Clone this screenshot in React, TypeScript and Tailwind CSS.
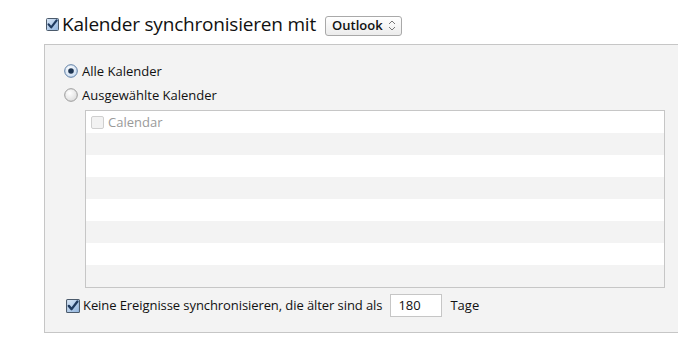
import React from 'react';

const Check = ({ size = 13 }: { size?: number }) => (
  <svg width={size} height={size} viewBox="0 0 13 13" className="shrink-0">
    <defs>
      <linearGradient id="cbg" x1="0" y1="0" x2="1" y2="1">
        <stop offset="0" stopColor="#dbe8f7" />
        <stop offset="1" stopColor="#8fb3dd" />
      </linearGradient>
    </defs>
    <rect x="0.5" y="0.5" width="12" height="12" rx="1" fill="url(#cbg)" stroke="#4b5a6b" />
    <path d="M2.6 6.4 L5.2 9.4 L10.6 2.4" fill="none" stroke="#1f3a5f" strokeWidth="2.2" strokeLinecap="round" strokeLinejoin="round" />
  </svg>
);

const EmptyBox = () => (
  <svg width="13" height="13" viewBox="0 0 13 13" className="shrink-0">
    <rect x="0.5" y="0.5" width="12" height="12" rx="1.5" fill="#f2f2f2" stroke="#cfcfcf" />
  </svg>
);

const Radio = ({ on }: { on?: boolean }) => (
  <svg width="14" height="14" viewBox="0 0 14 14" className="shrink-0">
    <defs>
      <radialGradient id={on ? 'rOn' : 'rOff'} cx="0.4" cy="0.35" r="0.7">
        <stop offset="0" stopColor="#ffffff" />
        <stop offset="1" stopColor={on ? '#c6d9ef' : '#dcdcdc'} />
      </radialGradient>
    </defs>
    <circle cx="7" cy="7" r="6.3" fill={`url(#${on ? 'rOn' : 'rOff'})`} stroke={on ? '#5f7fa5' : '#9a9a9a'} />
    {on && <circle cx="7" cy="7" r="2.8" fill="#1e3552" />}
  </svg>
);

const rows = Array.from({ length: 8 });

export default function App() {
  return (
    <div
      className="w-[678px] h-[344px] bg-white text-[#111] overflow-hidden"
      style={{ fontFamily: '"Open Sans", "Noto Sans", sans-serif' }}
    >
      <div className="h-[44px] pt-[15px] pl-[46px]">
        <div className="flex items-center h-[21px]">
          <span className="-mt-[3px]"><Check /></span>
          <span className="ml-[3px] text-[19px] leading-none tracking-[-0.2px] -mt-[2px]">Kalender synchronisieren mit</span>
          <div className="ml-[9px] flex items-center h-[20px] w-[77px] rounded-[3px] border border-[#a9a9a9] bg-gradient-to-b from-white to-[#ececec] pl-[6px] pr-[5px]">
            <span className="text-[13px] font-semibold leading-none">Outlook</span>
            <svg width="8" height="11" viewBox="0 0 8 11" className="ml-auto">
              <path d="M1 4 L4 1 L7 4 M1 7 L4 10 L7 7" fill="none" stroke="#777" strokeWidth="1" />
            </svg>
          </div>
        </div>
      </div>

      <div className="ml-[44px] h-[289px] border-t border-b border-l border-[#c6c6c6] bg-[#f3f3f3] pl-[19px] pt-[19px]">
        <label className="flex items-center gap-[4px] h-[14px]">
          <Radio on />
          <span className="text-[13px] leading-none">Alle Kalender</span>
        </label>
        <label className="flex items-center gap-[4px] h-[14px] mt-[10px]">
          <Radio />
          <span className="text-[13px] leading-none">Ausgewählte Kalender</span>
        </label>

        <div className="ml-[21px] mt-[8px] w-[580px] h-[178px] border border-[#c6c6c6] bg-white overflow-hidden">
          {rows.map((_, i) => (
            <div key={i} className={`h-[22px] flex items-center pl-[5px] ${i % 2 === 1 ? 'bg-[#f3f3f3]' : 'bg-white'}`}>
              {i === 0 && (
                <>
                  <EmptyBox />
                  <span className="ml-[4px] text-[13px] text-[#9a9a9a] leading-none">Calendar</span>
                </>
              )}
            </div>
          ))}
        </div>

        <div className="flex items-center mt-[6px] h-[23px]">
          <span className="ml-[2px]"><Check size={14} /></span>
          <span className="ml-[3px] text-[13px] leading-none tracking-[-0.08px]">Keine Ereignisse synchronisieren, die älter sind als</span>
          <div className="ml-[8px] w-[52px] h-[23px] border border-[#c6c6c6] bg-white flex items-center pl-[7px] text-[13px]">180</div>
          <span className="ml-[8px] text-[13px] leading-none">Tage</span>
        </div>
      </div>
    </div>
  );
}
